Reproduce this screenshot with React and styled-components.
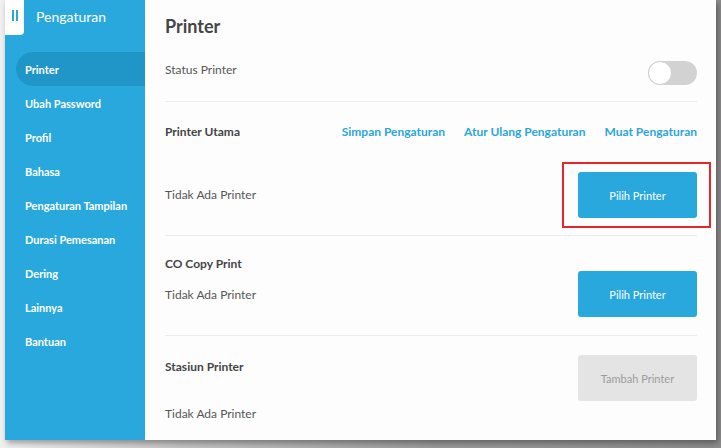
import React from "react";
import styled, { createGlobalStyle } from "styled-components";

const GlobalStyle = createGlobalStyle`
  html, body {
    margin: 0;
    padding: 0;
  }
  body {
    width: 721px;
    height: 448px;
    overflow: hidden;
    font-family: Lato, "Open Sans", sans-serif;
    background: linear-gradient(90deg, #f1f1f1 0%, #c4c4c4 25%, #9a9a9a 60%, #8c8c8c 100%);
  }
`;

const menuItems = [
  "Printer",
  "Ubah Password",
  "Profil",
  "Bahasa",
  "Pengaturan Tampilan",
  "Durasi Pemesanan",
  "Dering",
  "Lainnya",
  "Bantuan",
];

const Frame = styled.div`
  display: flex;
  margin-left: 5px;
  width: 711px;
  height: 440px;
  box-shadow: 2px 3px 6px rgba(0, 0, 0, 0.35);
`;

const Sidebar = styled.aside`
  width: 140px;
  flex-shrink: 0;
  background: #29a8de;
  display: flex;
  flex-direction: column;
`;

const SidebarHeader = styled.div`
  display: flex;
  align-items: center;
  height: 35px;
`;

const ToggleTab = styled.div`
  width: 19px;
  height: 35px;
  background: #fff;
  border-bottom-right-radius: 4px;
  display: flex;
  align-items: center;
  justify-content: center;
  gap: 2px;
  padding-bottom: 4px;
  box-sizing: border-box;
  margin-top: -1px;
`;

const TabBar = styled.span`
  width: 2px;
  height: 11px;
  background: #29a8de;
`;

const SidebarTitle = styled.div`
  margin-left: 12px;
  margin-top: -2px;
  font-size: 14px;
  color: #fff;
`;

const Nav = styled.nav`
  display: flex;
  flex-direction: column;
  margin-top: 17px;
  margin-left: 11px;
`;

const NavItem = styled.div`
  height: 34px;
  display: flex;
  align-items: center;
  padding-left: 9px;
  font-size: 11px;
  font-weight: 700;
  color: #fff;
  border-radius: 17px 0 0 17px;
  background: ${(p) => (p.$active ? "#2095c8" : "transparent")};
`;

const Main = styled.main`
  flex: 1;
  background: #fdfdfd;
  padding: 0 19px 0 20px;
  display: flex;
  flex-direction: column;
`;

const PageTitle = styled.h1`
  margin: 0;
  padding-top: 15px;
  height: 52px;
  font-size: 18px;
  font-weight: 700;
  color: #454545;
  line-height: 22px;
  box-sizing: border-box;
`;

const StatusRow = styled.div`
  display: flex;
  align-items: flex-start;
  justify-content: space-between;
  height: 50px;
  padding-top: 8px;
  box-sizing: border-box;
  border-bottom: 1px solid #ececec;
`;

const Label = styled.div`
  font-size: 12px;
  color: #565656;
  line-height: 20px;
`;

const Switch = styled.div`
  width: 49px;
  height: 24px;
  border-radius: 12px;
  background: #d2d2d2;
  position: relative;
  margin-top: 1px;
`;

const Knob = styled.span`
  position: absolute;
  left: 0;
  top: 0;
  width: 24px;
  height: 24px;
  border-radius: 50%;
  background: #fff;
  border: 1px solid #cfcfcf;
  box-sizing: border-box;
`;

const Section = styled.section`
  display: grid;
  grid-template-columns: 1fr auto;
  grid-template-areas: ${(p) => p.$areas};
  row-gap: ${(p) => p.$gap}px;
  padding: ${(p) => p.$pad};
  border-bottom: ${(p) => (p.$last ? "none" : "1px solid #ececec")};
`;

const SectionTitle = styled.div`
  grid-area: title;
  align-self: start;
  font-size: 12px;
  font-weight: 700;
  color: #444;
  line-height: 20px;
  margin-top: ${(p) => p.$offset || 0}px;
`;

const RowLabel = styled(Label)`
  grid-area: label;
  align-self: center;
  padding-bottom: ${(p) => p.$pb || 0}px;
`;

const Links = styled.div`
  grid-area: links;
  display: flex;
  gap: 19px;
  align-items: center;
`;

const LinkText = styled.a`
  font-size: 12px;
  font-weight: 700;
  color: #2ba6da;
  line-height: 20px;
  text-decoration: none;
`;

const Button = styled.button`
  grid-area: button;
  justify-self: end;
  align-self: ${(p) => p.$align || "center"};
  width: 119px;
  height: 46px;
  border: none;
  border-radius: 3px;
  font-family: inherit;
  font-size: 11px;
  color: ${(p) => (p.$disabled ? "#9c9c9c" : "#fff")};
  background: ${(p) => (p.$disabled ? "#e4e4e4" : "#29a8de")};
`;

const Highlight = styled.div`
  grid-area: button;
  justify-self: end;
  align-self: center;
  position: relative;
  display: flex;
`;

const HighlightBox = styled.span`
  position: absolute;
  left: -16px;
  top: -10px;
  right: -14px;
  bottom: -10px;
  border: 2px solid #e8262a;
  pointer-events: none;
`;

const App = () => (
  <>
    <GlobalStyle />
    <Frame>
      <Sidebar>
        <SidebarHeader>
          <ToggleTab>
            <TabBar />
            <TabBar />
          </ToggleTab>
          <SidebarTitle>Pengaturan</SidebarTitle>
        </SidebarHeader>
        <Nav>
          {menuItems.map((item, i) => (
            <NavItem key={item} $active={i === 0}>
              {item}
            </NavItem>
          ))}
        </Nav>
      </Sidebar>
      <Main>
        <PageTitle>Printer</PageTitle>
        <StatusRow>
          <Label>Status Printer</Label>
          <Switch>
            <Knob />
          </Switch>
        </StatusRow>

        <Section $areas={`"title links" "label button"`} $gap={30} $pad="20px 0 17px">
          <SectionTitle>Printer Utama</SectionTitle>
          <Links>
            <LinkText>Simpan Pengaturan</LinkText>
            <LinkText>Atur Ulang Pengaturan</LinkText>
            <LinkText>Muat Pengaturan</LinkText>
          </Links>
          <RowLabel>Tidak Ada Printer</RowLabel>
          <Highlight>
            <Button>Pilih Printer</Button>
            <HighlightBox />
          </Highlight>
        </Section>

        <Section $areas={`"title button" "label button"`} $gap={11} $pad="18px 0 18px">
          <SectionTitle>CO Copy Print</SectionTitle>
          <RowLabel $pb={12}>Tidak Ada Printer</RowLabel>
          <Button $align="end">Pilih Printer</Button>
        </Section>

        <Section $areas={`"title button" "label ."`} $gap={3} $pad="19px 0 0" $last>
          <SectionTitle $offset={2}>Stasiun Printer</SectionTitle>
          <Button $align="start" $disabled>
            Tambah Printer
          </Button>
          <RowLabel>Tidak Ada Printer</RowLabel>
        </Section>
      </Main>
    </Frame>
  </>
);

export default App;
